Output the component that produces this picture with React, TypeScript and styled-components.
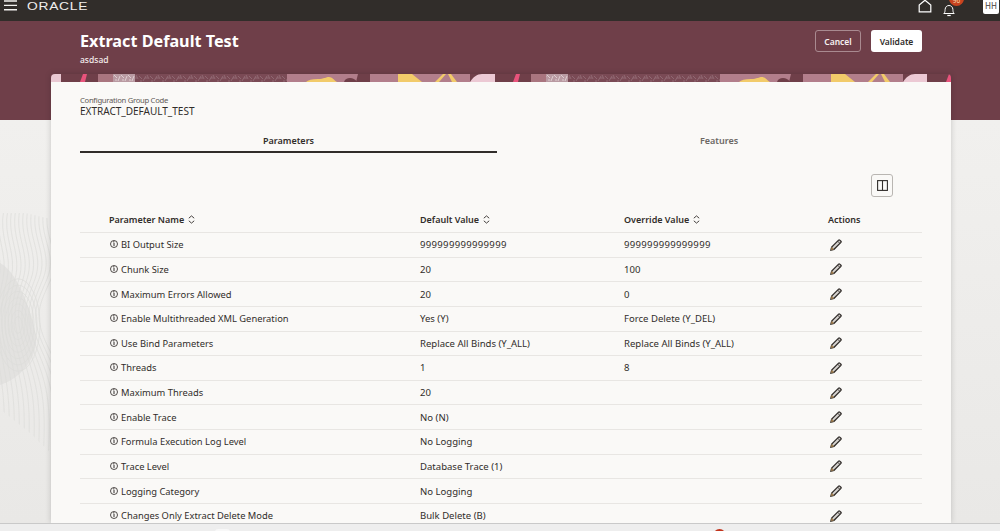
import React from "react";
import styled, { createGlobalStyle } from "styled-components";

const Global = createGlobalStyle`
  html, body { margin: 0; padding: 0; height: 531px; overflow: hidden; }
  body { font-family: "Noto Sans", "Open Sans", sans-serif; color: #312d2a; }
  #root { height: 531px; }
`;

const Screen = styled.div`
  height: 531px; width: 1000px; display: flex; flex-direction: column; overflow: hidden;
`;
const TopBar = styled.header`
  height: 21px; flex: none; background: #312d2a; display: flex; align-items: flex-start; position: relative; overflow: hidden;
`;
const Burger = styled.svg`width: 16px; height: 12px; margin: 0 0 0 4px; display: block;`;
const Logo = styled.div`
  margin-left: 7px; font-family: "Liberation Sans", sans-serif; font-size: 11.500px; line-height: 12px; letter-spacing: .6px; color: #f0eeec; transform: scaleX(1.2); transform-origin: left center; height: 12px;
`;
const TopRight = styled.div`margin-left: auto; display: flex; align-items: flex-start;`;
const HomeIcon = styled.svg`width: 14px; height: 13px; margin: 0 9px 0 0;`;
const Bell = styled.div`position: relative; width: 16px; height: 13px; margin-right: 26px;`;
const Badge = styled.span`
  position: absolute; left: 8px; top: -9px; width: 15px; height: 15px; border-radius: 50%; background: #c8431f; color: #f5d9a8; font-size: 6.500px; line-height: 20px; text-align: center;
`;
const Avatar = styled.div`
  width: 16px; height: 14px; background: #fff; border-radius: 0 0 2px 2px; margin-right: 1px; color: #5f5a56; font-size: 8px; font-weight: 500; line-height: 12px; text-align: center;
`;
const Main = styled.main`
  flex: 1; min-height: 0; position: relative; overflow: hidden;
  background: linear-gradient(180deg, #f2f1ef 0%, #f1f0ee 20%, #e9e8e6 100%);
`;
const Topo = styled.svg`position: absolute; left: 0; top: 192px; width: 51px; height: 240px;`;
const Hero = styled.section`
  height: 99px; background: #6f3f49; padding: 9px 78px 0 80px; box-sizing: border-box; display: flex; justify-content: space-between; align-items: flex-start;
`;
const Title = styled.h1`margin: 0; font-size: 16.200px; line-height: 22px; font-weight: 700; color: #fff;`;
const Subtitle = styled.div`font-size: 8.500px; line-height: 12px; font-weight: 500; color: #f3ecec; margin-top: 2px;`;
const Actions = styled.div`display: flex; gap: 10px;`;
const HeroButton = styled.button<{ $solid?: boolean }>`
  height: 22px; padding: 0; box-sizing: border-box; border-radius: 3px; font-family: inherit; font-size: 8.500px; font-weight: 600;
  width: ${p => (p.$solid ? "51px" : "46px")};
  background: ${p => (p.$solid ? "#fff" : "transparent")};
  color: ${p => (p.$solid ? "#312d2a" : "#f6f1f1")};
  border: ${p => (p.$solid ? "none" : "1px solid #a98a90")};
`;
const Shell = styled.div`
  position: relative; width: 900px; margin: -46px 0 0 51px; height: 449px; box-shadow: 0 0 6px rgba(0,0,0,.18);
`;
const Strip = styled.svg`display: block; width: 900px; height: 8px; border-radius: 4px 4px 0 0;`;
const Card = styled.div`
  background: #faf9f7; height: 441px; padding: 13px 29px 0; box-sizing: border-box; overflow: hidden;
`;
const FieldLabel = styled.div`font-size: 7.700px; letter-spacing: -.3px; line-height: 10px; color: #5f5a56;`;
const FieldValue = styled.div`font-size: 10px; line-height: 12px; color: #312d2a;`;
const Tabs = styled.div`display: grid; grid-template-columns: 417px 444px; margin-top: 11px; margin-right: -19px;`;
const Tab = styled.div<{ $active?: boolean }>`
  height: 25px; box-sizing: border-box; padding-top: 7px; text-align: center; font-size: 9px; line-height: 12px; font-weight: 600;
  color: ${p => (p.$active ? "#312d2a" : "#6b6764")};
  border-bottom: 2px solid ${p => (p.$active ? "#312d2a" : "transparent")};
`;
const Toolbar = styled.div`display: flex; justify-content: flex-end; padding: 21px 29px 0 0;`;
const ColumnButton = styled.button`
  width: 22px; height: 23px; padding: 0; background: transparent; border: 1px solid #b9b6b2; border-radius: 3px; display: flex; align-items: center; justify-content: center;
`;
const Table = styled.table`
  width: 842px; border-collapse: collapse; table-layout: fixed; margin-top: 9px; color: #312d2a;
`;
const Th = styled.th`
  height: 26px; padding: 0; text-align: left; font-weight: 600; font-size: 9px; vertical-align: middle;
  &:first-child { padding-left: 29px; }
`;
const Tr = styled.tr`height: 24.640px; border-top: 1px solid #e8e6e3;`;
const NameTd = styled.td`padding: 1px 0 0 29px; vertical-align: middle; line-height: 12px; white-space: nowrap; font-size: 9.350px;`;
const ValueTd = styled.td<{ $digits?: boolean }>`
  padding: 1px 0 0; vertical-align: middle; line-height: 12px; white-space: nowrap; font-size: 9.550px;
  letter-spacing: ${p => (p.$digits ? ".32px" : "0")};
`;
const ActionTd = styled.td`padding: 0 0 0 2px; vertical-align: middle; line-height: 0;`;
const HeadCell = styled.span`display: inline-flex; align-items: center; gap: 4px;`;
const NameCell = styled.span`display: inline-flex; align-items: center; gap: 3.500px;`;
const InfoIcon = styled.svg`width: 8px; height: 8px; margin: -2px 0 0 .5px; flex: none;`;
const BottomBar = styled.footer`
  height: 8px; flex: none; background: #eeeeee; border-top: 1px solid #c9c9c9; box-sizing: border-box; position: relative; overflow: hidden;
`;
const RedDot = styled.span`
  position: absolute; left: 713px; top: 5px; width: 13px; height: 13px; border-radius: 50%; background: #c2331c;
`;
const PaleTab = styled.span`
  position: absolute; left: 215px; top: 5px; width: 15px; height: 6px; border-radius: 3px; background: #f8f8f8;
`;

const Sort = () => (
  <svg width="7" height="9" viewBox="0 0 7 9" fill="none" stroke="#312d2a" strokeWidth=".9">
    <path d="M.8 3.200 3.500.9l2.700 2.300M.8 5.800l2.700 2.300 2.700-2.300" />
  </svg>
);
const Info = () => (
  <InfoIcon viewBox="0 0 8 8" fill="none" stroke="#312d2a" strokeWidth=".85">
    <circle cx="4" cy="4" r="3.500" />
    <path d="M4 3v3M3.100 1.900h1.300" strokeWidth="1" />
  </InfoIcon>
);
const Pencil = () => (
  <svg width="12" height="12" viewBox="0 0 12 12" fill="none" stroke="#312d2a" strokeWidth="1.300">
    <path d="M.9 11.100 1.700 8 8.600 1.100a.8.800 0 0 1 1.100 0l1.200 1.200a.8.800 0 0 1 0 1.100L4 10.300Z" fill="#d9d6d2" />
    <path d="M7.700 2.200 9.800 4.300" strokeWidth=".9" />
    <path d="M.9 11.100 1.700 8 4 10.300Z" fill="#b98a4a" stroke="#7a6a55" strokeWidth=".5" />
  </svg>
);

const rows: [string, string, string][] = [
  ["BI Output Size", "999999999999999", "999999999999999"],
  ["Chunk Size", "20", "100"],
  ["Maximum Errors Allowed", "20", "0"],
  ["Enable Multithreaded XML Generation", "Yes (Y)", "Force Delete (Y_DEL)"],
  ["Use Bind Parameters", "Replace All Binds (Y_ALL)", "Replace All Binds (Y_ALL)"],
  ["Threads", "1", "8"],
  ["Maximum Threads", "20", ""],
  ["Enable Trace", "No (N)", ""],
  ["Formula Execution Log Level", "No Logging", ""],
  ["Trace Level", "Database Trace (1)", ""],
  ["Logging Category", "No Logging", ""],
  ["Changes Only Extract Delete Mode", "Bulk Delete (B)", ""],
];

const isDigits = (v: string) => /^\d{4,}$/.test(v);

const PatternStrip = () => (
  <Strip viewBox="0 0 900 8" preserveAspectRatio="none">
    <defs>
      <pattern id="speck" width="11" height="8" patternUnits="userSpaceOnUse">
        <rect width="11" height="8" fill="#7a4a55" />
        <path d="M0 2l3 3M4 7l3-5M8 1l2 4M1 7h2M6 4h3" stroke="#a07c86" strokeWidth=".6" fill="none" />
      </pattern>
      <pattern id="specklight" width="7" height="8" patternUnits="userSpaceOnUse">
        <rect width="7" height="8" fill="#b99aa2" />
        <path d="M0 1l3 3M4 7l2-5M1 6h2" stroke="#e2d4d6" strokeWidth=".9" fill="none" />
      </pattern>
      <g id="tile">
        <rect x="0" width="10" height="8" fill="#e9c8d2" />
        <path d="M29 8 32 0h4l-2 8Z" fill="#e9537c" />
        <rect x="47" width="16" height="8" fill="#a9757f" />
        <rect x="62" width="22" height="8" fill="url(#specklight)" />
        <rect x="84" width="152" height="8" fill="url(#speck)" />
        <rect x="236" width="71" height="8" fill="#b27e8b" />
        <path d="M255 8c2-2 6-3 12-3s8-2 11-2 5 3 8 5Z" fill="#f2cb6a" />
        <path d="M293 8c1-3 3-4 6-4s5 1 7 4Z" fill="#6f3f49" />
        <path d="M307 0h12v8h-14Z" fill="#6f3f49" />
        <rect x="319" width="100" height="8" fill="#b27e8b" />
        <path d="M347 0h14l10 8h-24Z" fill="#f2cb6a" />
        <path d="M384 8 392 0h3l-7 8ZM397 0h3l6 8h-5Z" fill="#f2cb6a" />
        <path d="M419 8c3-5 7-8 12-8h3v8Z" fill="#ecc9d4" />
      </g>
    </defs>
    <rect width="900" height="8" fill="#6f3f49" />
    <use href="#tile" x="0" />
    <use href="#tile" x="433" />
    <use href="#tile" x="866" />
    <rect x="433" width="11" height="8" fill="#ecc9d4" />
    <rect x="866" width="10" height="8" fill="#ecc9d4" />
  </Strip>
);

export default function App() {
  return (
    <Screen>
      <Global />
      <TopBar>
        <Burger viewBox="0 0 16 12" stroke="#f4f2f0" strokeWidth="1.400">
          <path d="M0 1h13M0 5.400h13M0 9.800h13" />
        </Burger>
        <Logo>ORACLE</Logo>
        <TopRight>
          <HomeIcon viewBox="0 0 14 13" fill="none" stroke="#fff" strokeWidth="1.200">
            <path d="M1.200 11.800V5L7 .2 12.800 5v6.800Z" />
          </HomeIcon>
          <Bell>
            <svg width="16" height="13" viewBox="0 0 16 13" fill="none" stroke="#fff" strokeWidth="1">
              <path d="M2.800 9.500c1.300-1 1.200-2.600 1.300-4C4.300 3 5.800 1.500 8 1.500s3.700 1.500 3.900 4c.1 1.400 0 3 1.300 4Z" />
              <path d="M6.300 11.500h3.400" strokeWidth="1.200" />
            </svg>
            <Badge>96</Badge>
          </Bell>
          <Avatar>HH</Avatar>
        </TopRight>
      </TopBar>
      <Main>
        <Topo viewBox="0 0 51 240" fill="none" stroke="#dddcda" strokeWidth=".7">
          <defs>
            <clipPath id="topoClip">
              <path d="M0 0h25l26 6v234l-21-20L0 196Z" />
            </clipPath>
          </defs>
          <g clipPath="url(#topoClip)">
            <path d="M0 50c20 10 35 60 36 76s-12 38-36 46Z" fill="#e3e2e0" stroke="none" />
            {Array.from({ length: 14 }).map((_, i) => (
              <path key={i} d={`M${-4 + i * 4} -4c-6 28 ${8 + i / 2} 44 3 70s-${6 + i} 36 -2 70s${10 + i} 50 ${6 + i} 110`} />
            ))}
            {[4, 7, 10, 13, 16, 19, 22].map(r => (
              <ellipse key={r} cx="18" cy="112" rx={r} ry={r * 2.1} />
            ))}
          </g>
        </Topo>
        <Hero>
          <div>
            <Title>Extract Default Test</Title>
            <Subtitle>asdsad</Subtitle>
          </div>
          <Actions>
            <HeroButton>Cancel</HeroButton>
            <HeroButton $solid>Validate</HeroButton>
          </Actions>
        </Hero>
        <Shell>
          <PatternStrip />
          <Card>
            <FieldLabel>Configuration Group Code</FieldLabel>
            <FieldValue>EXTRACT_DEFAULT_TEST</FieldValue>
            <Tabs>
              <Tab $active>Parameters</Tab>
              <Tab>Features</Tab>
            </Tabs>
            <Toolbar>
              <ColumnButton aria-label="Columns">
                <svg width="11" height="11" viewBox="0 0 11 11" fill="none" stroke="#312d2a" strokeWidth="1.100">
                  <rect x=".6" y=".6" width="9.800" height="9.800" />
                  <path d="M5.500 .6v9.800" />
                </svg>
              </ColumnButton>
            </Toolbar>
            <Table>
              <colgroup>
                <col style={{ width: 340 }} />
                <col style={{ width: 204 }} />
                <col style={{ width: 204 }} />
                <col />
              </colgroup>
              <thead>
                <tr>
                  <Th><HeadCell>Parameter Name <Sort /></HeadCell></Th>
                  <Th><HeadCell>Default Value <Sort /></HeadCell></Th>
                  <Th><HeadCell>Override Value <Sort /></HeadCell></Th>
                  <Th>Actions</Th>
                </tr>
              </thead>
              <tbody>
                {rows.map(r => (
                  <Tr key={r[0]}>
                    <NameTd><NameCell><Info />{r[0]}</NameCell></NameTd>
                    <ValueTd $digits={isDigits(r[1])}>{r[1]}</ValueTd>
                    <ValueTd $digits={isDigits(r[2])}>{r[2]}</ValueTd>
                    <ActionTd><Pencil /></ActionTd>
                  </Tr>
                ))}
              </tbody>
            </Table>
          </Card>
        </Shell>
      </Main>
      <BottomBar><PaleTab /><RedDot /></BottomBar>
    </Screen>
  );
}
